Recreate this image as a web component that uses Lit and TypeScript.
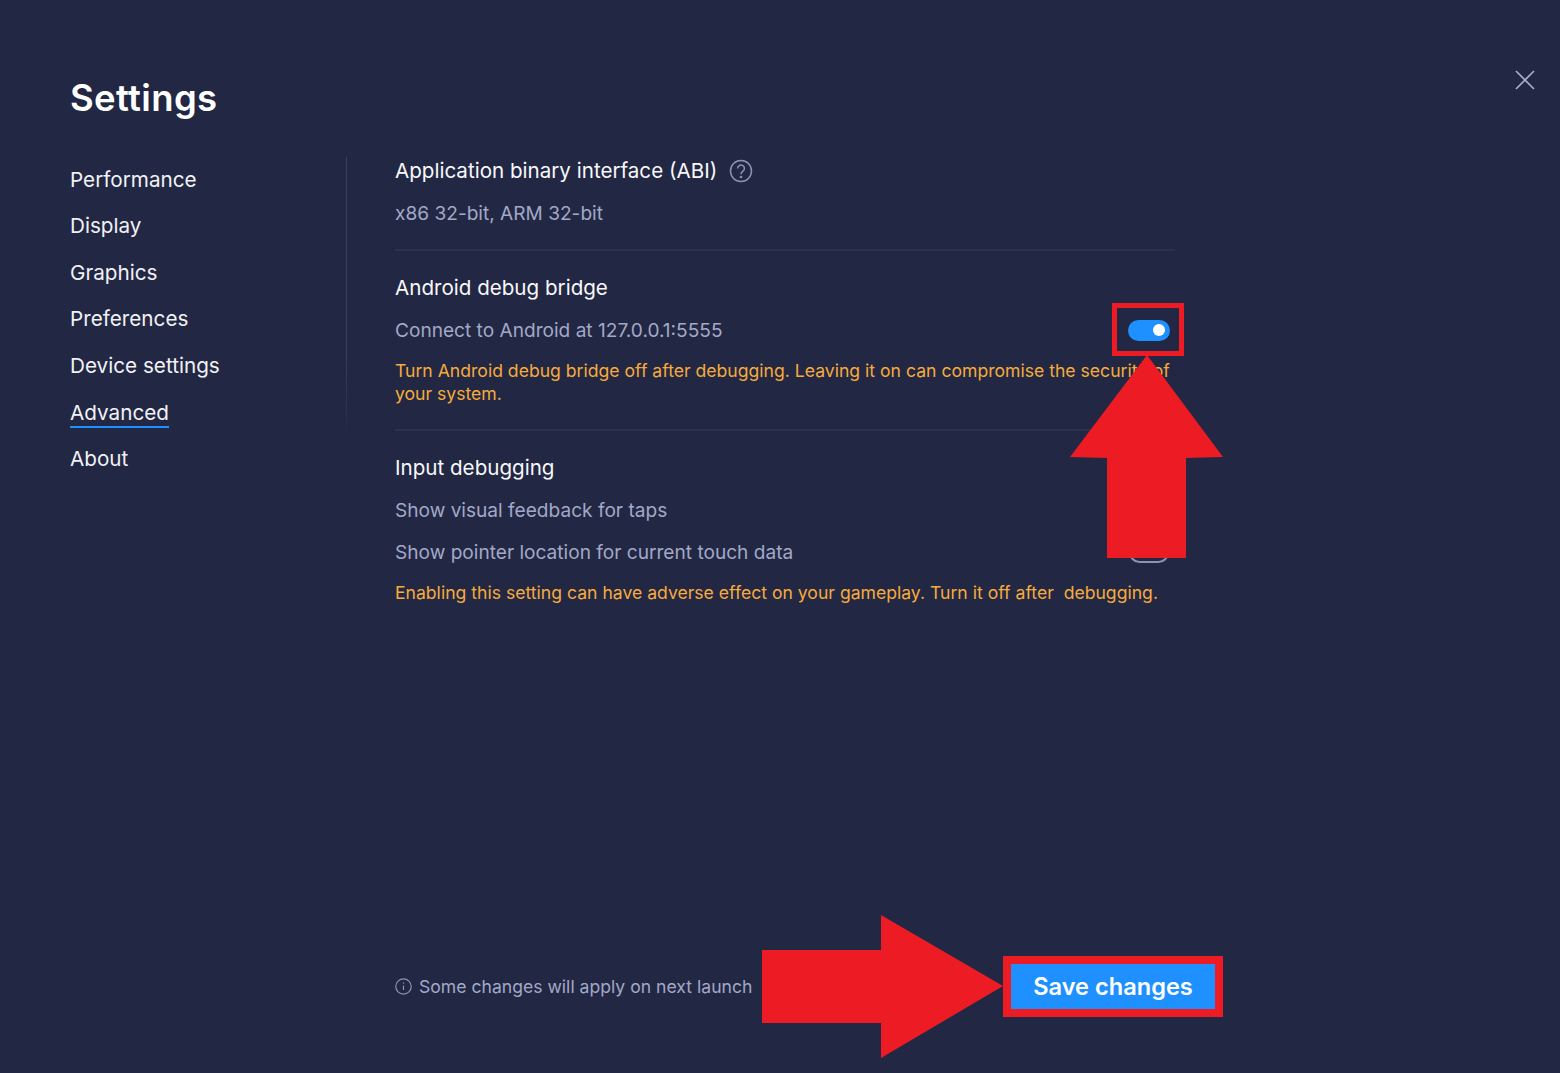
import { LitElement, html, css } from "lit";
import { customElement } from "lit/decorators.js";

const NAV = ["Performance", "Display", "Graphics", "Preferences", "Device settings", "Advanced", "About"];

@customElement("app-root")
export class AppRoot extends LitElement {
  static styles = css`
    :host { display: block; width: 1560px; height: 1073px; position: relative; overflow: hidden; background: #222743; font-family: "Inter", "Roboto", sans-serif; color: #fff; }
    .page { display: flex; flex-direction: column; height: 100%; padding: 76px 0 0 70px; box-sizing: border-box; }
    h1 { margin: 0 0 37px; font-size: 36.5px; line-height: 44px; font-weight: 600; height: 44px; letter-spacing: 0.35px; }
    .cols { display: flex; flex: 1; }
    .nav { width: 276px; height: 283px; border-right: 1px solid transparent; border-image: linear-gradient(#3a3f5e 70%, #222743) 1; display: flex; flex-direction: column; flex: none; }
    .nav a { height: 46.6px; line-height: 46px; font-size: 20.7px; color: #f1f2f6; flex: none; }
    .nav a:nth-child(2) { margin-top: -0.4px; }
    .nav a span { display: inline-block; line-height: 26px; }
    .nav a.on span { border-bottom: 2px solid #1e90ff; }
    .main { margin-left: 48px; width: 780px; display: flex; flex-direction: column; }
    .sec { border-bottom: 2px solid #2d3150; }
    .sec.last { border: none; }
    .h { font-size: 20.6px; line-height: 28px; color: #f8f8fb; display: flex; align-items: center; gap: 12px; }
    .row { display: flex; justify-content: space-between; align-items: center; font-size: 19.1px; line-height: 28px; color: #a2a9c8; }
    .warn { font-size: 17.6px; line-height: 22.6px; color: #f7ab3c; }
    .a { height: 92px; }
    .a .h { margin-bottom: 14px; }
    .b { padding-top: 23px; height: 155px; }
    .b .h { margin-bottom: 14px; }
    .b .warn { margin-top: 16px; width: 780px; }
    .c { padding-top: 23px; }
    .c .h { margin-bottom: 14px; }
    .c .row + .row { margin-top: 14px; }
    .c .warn { margin-top: 16px; }
    .toggle { width: 42px; height: 21px; border-radius: 11px; background: #1e90ff; position: relative; margin: 0 5px 0 0; flex: none; }
    .toggle::after { content: ""; position: absolute; width: 12px; height: 12px; border-radius: 50%; background: #fff; right: 5px; top: 4.5px; }
    .toggle.off { background: transparent; border: 2px solid #8d93b2; box-sizing: border-box; width: 40px; margin-right: 6px; }
    .toggle.off::after { background: #8d93b2; left: 4px; right: auto; top: 2.5px; }
    .foot { display: flex; align-items: center; position: absolute; left: 395px; top: 964px; width: 820px; height: 45px; justify-content: space-between; }
    .note { display: flex; align-items: center; gap: 7px; font-size: 17.6px; color: #a2a9c8; }
    .save { width: 204px; height: 45px; border: none; background: #1e90ff; color: #fff; font: 600 23.6px "Inter", "Roboto", sans-serif; padding: 0; }
    .close { position: absolute; left: 1515px; top: 70px; width: 20px; height: 20px; }
    .overlay { position: absolute; inset: 0; width: 1560px; height: 1073px; pointer-events: none; }
  `;

  render() {
    return html`
      <div class="page">
        <h1>Settings</h1>
        <div class="cols">
          <div class="nav">
            ${NAV.map((n) => html`<a class=${n === "Advanced" ? "on" : ""}><span>${n}</span></a>`)}
          </div>
          <div class="main">
            <div class="sec a">
              <div class="h">Application binary interface (ABI)
                <svg width="24" height="24" viewBox="0 0 24 24" fill="none" stroke="#8d93b2" stroke-width="1.5">
                  <circle cx="12" cy="12" r="10.5"></circle>
                  <path d="M8.6 9.5a3.4 3.4 0 1 1 5.4 2.7c-1.2.9-2 1.5-2 3"></path>
                  <circle cx="12" cy="18" r=".6" fill="#8d93b2"></circle>
                </svg>
              </div>
              <div class="row">x86 32-bit, ARM 32-bit</div>
            </div>
            <div class="sec b">
              <div class="h">Android debug bridge</div>
              <div class="row">Connect to Android at 127.0.0.1:5555<div class="toggle"></div></div>
              <div class="warn">Turn Android debug bridge off after debugging. Leaving it on can compromise the security of your system.</div>
            </div>
            <div class="sec c last">
              <div class="h">Input debugging</div>
              <div class="row">Show visual feedback for taps<div class="toggle off"></div></div>
              <div class="row">Show pointer location for current touch data<div class="toggle off"></div></div>
              <div class="warn">Enabling this setting can have adverse effect on your gameplay. Turn it off after&nbsp; debugging.</div>
            </div>
          </div>
        </div>
      </div>
      <div class="foot">
        <div class="note">
          <svg width="17" height="17" viewBox="0 0 17 17" fill="none" stroke="#8d93b2" stroke-width="1.2">
            <circle cx="8.5" cy="8.5" r="7.7"></circle>
            <path d="M8.5 7.5v4.5M8.5 4.6v1.2"></path>
          </svg>
          Some changes will apply on next launch
        </div>
        <button class="save">Save changes</button>
      </div>
      <svg class="close" viewBox="0 0 20 20" fill="none" stroke="#a9aec8" stroke-width="1.6"><path d="M1 1l18 18M19 1L1 19"></path></svg>
      <svg class="overlay" viewBox="0 0 1560 1073">
        <rect x="1114.5" y="305.5" width="67" height="48" fill="none" stroke="#ed1c24" stroke-width="5"></rect>
        <polygon points="1147,355 1223,457 1186,458 1186,558 1107,558 1107,458 1070,457" fill="#ed1c24"></polygon>
        <rect x="1007" y="960" width="212" height="53" fill="none" stroke="#ed1c24" stroke-width="8"></rect>
        <polygon points="762,950 881,950 881,915 1003,986 881,1058 881,1023 762,1023" fill="#ed1c24"></polygon>
      </svg>
    `;
  }
}
